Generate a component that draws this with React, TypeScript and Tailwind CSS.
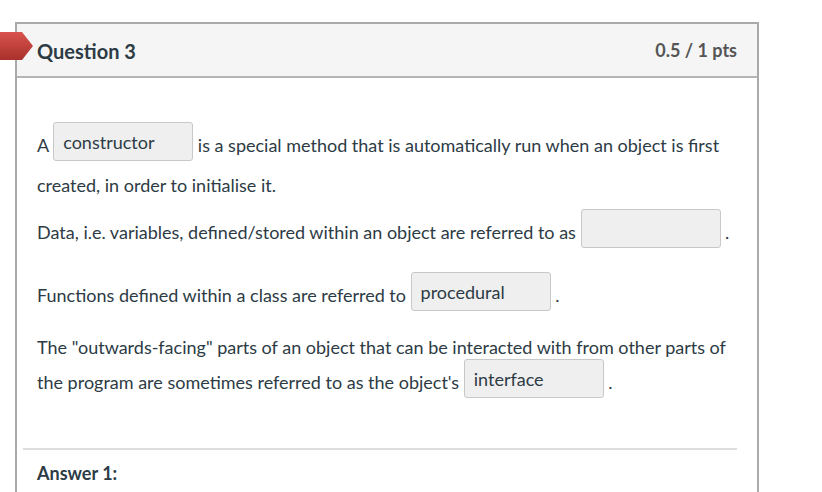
import React from "react";

function Box({ text }: { text?: string }) {
  return (
    <span className="inline-flex h-[39px] w-[140px] items-center rounded-[3px] border border-[#c8c8c8] bg-[#efefef] pl-[9px] pt-[1px] align-middle text-[18px] leading-[24px] text-[#2d3b45] mb-[12px]">
      {text}
    </span>
  );
}

export default function App() {
  return (
    <div className="relative h-[492px] w-[822px] overflow-hidden bg-white font-['Lato',sans-serif] text-[#2d3b45]">
      <div className="ml-[15px] mt-[22px] w-[744px] border-2 border-[#aaaaaa] border-b-0 h-[480px]">
        <div className="flex h-[54px] items-center justify-between border-b-2 border-[#b5b5b5] bg-[#f5f5f5] px-[20px] pt-[1px]">
          <div className="text-[20px] font-bold text-[#2d3b45]">Question 3</div>
          <div className="text-[18px] font-bold text-[#555555]">0.5 / 1 pts</div>
        </div>
        <div className="px-[20px] pt-[44px] text-[18px] leading-[24px]">
          <p className="mb-[12px]">
            A <Box text="constructor" /> is a special method that is automatically run when an object is first created, in order to initialise it.
          </p>
          <p className="mb-[12px]">
            Data, i.e. variables, defined/stored within an object are referred to as <Box /> .
          </p>
          <p className="mb-[12px]">
            Functions defined within a class are referred to <Box text="procedural" /> .
          </p>
          <p className="mb-[12px]">
            The "outwards-facing" parts of an object that can be interacted with from other parts of the program are sometimes referred to as the object's <Box text="interface" /> .
          </p>
        </div>
        <div className="ml-[6px] mr-[20px] mt-[38px] h-[2px] bg-[#dddddd]" />
        <div className="px-[20px] pt-[10px] text-[18px] font-bold">Answer 1:</div>
      </div>
      <svg className="absolute left-0 top-[32px]" width="34" height="29" viewBox="0 0 34 29">
        <defs>
          <linearGradient id="tabg" x1="0" y1="0" x2="0" y2="1">
            <stop offset="0" stopColor="#d9534f" />
            <stop offset="1" stopColor="#a9302b" />
          </linearGradient>
        </defs>
        <polygon points="0,0 22,0 33,14 22,28 0,28" fill="url(#tabg)" />
      </svg>
    </div>
  );
}
